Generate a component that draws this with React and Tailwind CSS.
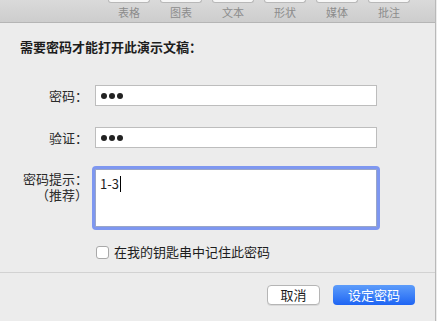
const tabs = ['表格', '图表', '文本', '形状', '媒体', '批注'];

const font = { fontFamily: '"Noto Sans CJK SC", "Noto Sans", sans-serif' };

function Dots() {
  return (
    <span className="flex gap-[2px]">
      <span className="h-[6px] w-[6px] rounded-full bg-[#222]" />
      <span className="h-[6px] w-[6px] rounded-full bg-[#222]" />
      <span className="h-[6px] w-[6px] rounded-full bg-[#222]" />
    </span>
  );
}

export default function App() {
  return (
    <div
      className="flex h-[321px] w-[437px] overflow-hidden bg-[#ececec] text-[#1d1d1d]"
      style={font}
    >
      <div className="flex w-[436px] flex-col border-r border-[#b9b9b9]">
        {/* toolbar */}
        <div className="flex h-[23px] shrink-0 border-b border-[#b5b5b5] bg-gradient-to-b from-[#dadada] to-[#cdcdcd] pl-[103px]">
          {tabs.map((t) => (
            <div key={t} className="flex w-[52px] flex-col items-center">
              <div className="h-[3px] w-[42px] rounded-b-[3px] border border-t-0 border-[#b8b8b8] bg-[#f7f7f7]" />
              <span className="mt-[2px] text-[11px] leading-[14px] text-[#8c8c8c]">{t}</span>
            </div>
          ))}
        </div>

        {/* heading */}
        <h1 className="ml-[20px] mt-[15px] text-[13px] font-bold leading-[18px]">
          需要密码才能打开此演示文稿：
        </h1>

        {/* fields */}
        <div className="mt-[29px] flex items-center">
          <label className="w-[88px] text-right text-[13px] leading-[18px] text-[#2a2a2a]">密码：</label>
          <div className="ml-[7px] flex h-[21px] w-[282px] items-center border border-[#bdbdbd] bg-white pl-[5px]">
            <Dots />
          </div>
        </div>

        <div className="mt-[21px] flex items-center">
          <label className="w-[88px] text-right text-[13px] leading-[18px] text-[#2a2a2a]">验证：</label>
          <div className="ml-[7px] flex h-[21px] w-[282px] items-center border border-[#bdbdbd] bg-white pl-[5px]">
            <Dots />
          </div>
        </div>

        <div className="mt-[18px] flex items-start">
          <div className="mt-[5px] flex w-[88px] flex-col items-end text-[13px] leading-[16px] text-[#2a2a2a]">
            <span className="block">密码提示：</span>
            <span className="block">（推荐）</span>
          </div>
          <div className="ml-[4px] h-[64px] w-[288px] rounded-[4px] bg-[#7e97f0] p-[3px]">
            <div className="flex h-full w-full items-start border border-[#9aa6c8] bg-white pl-[4px] pt-[5px] text-[13px] leading-[18px]">
              1-3<span className="ml-[1px] mt-[1px] h-[16px] w-[1px] bg-black" />
            </div>
          </div>
        </div>

        <div className="ml-[96px] mt-[13px] flex items-center">
          <span className="h-[13px] w-[13px] rounded-[3px] border border-[#a9a9a9] bg-white" />
          <span className="ml-[5px] text-[13px] leading-[18px]">在我的钥匙串中记住此密码</span>
        </div>

        <div className="mt-[11px] border-t border-[#d2d2d2]" />

        <div className="mt-[12px] flex justify-end pr-[20px]">
          <button className="h-[20px] w-[53px] rounded-[4px] border border-[#b5b5b5] bg-white text-[13px] leading-[18px] shadow-[0_1px_0_rgba(0,0,0,0.08)]">
            取消
          </button>
          <button className="ml-[13px] h-[20px] w-[82px] rounded-[4px] bg-gradient-to-b from-[#5d9cfa] to-[#1e64f3] text-[13px] leading-[18px] text-white">
            设定密码
          </button>
        </div>
      </div>
    </div>
  );
}
